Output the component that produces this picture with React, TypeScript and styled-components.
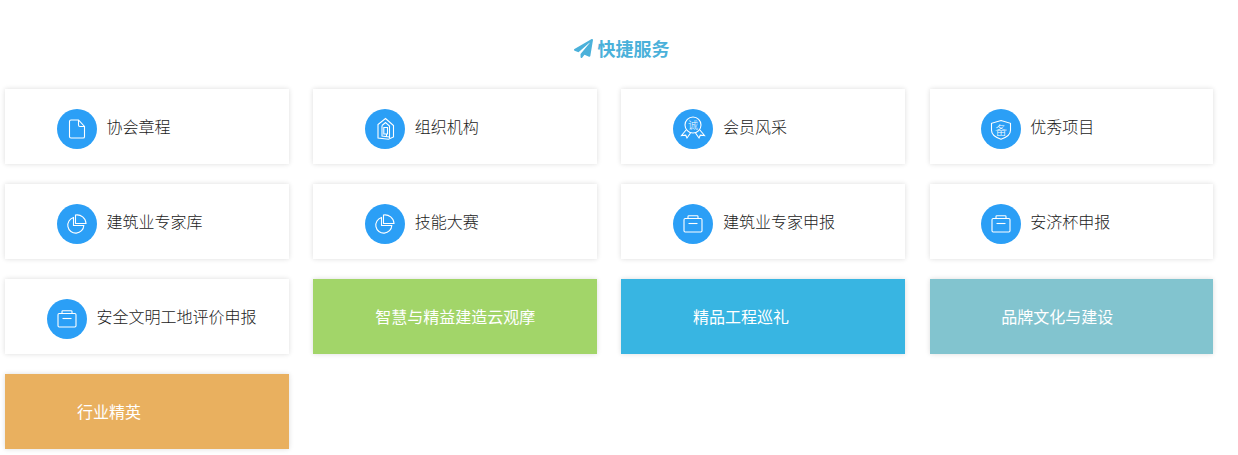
import React from 'react';
import styled, { createGlobalStyle } from 'styled-components';
import { FaPaperPlane } from 'react-icons/fa';

type IconName = 'file' | 'house' | 'medal' | 'shield' | 'pie' | 'case';

const GlobalStyle = createGlobalStyle`
	html, body {
		margin: 0;
		padding: 0;
		background: #fff;
		font-family: "Liberation Sans", "Noto Sans CJK SC", sans-serif;
	}
`;

const ServiceIcon = ({ name }: { name: IconName }) => {
	return (
		<svg width="40" height="40" viewBox="0 0 40 40" fill="none" stroke="#fff" strokeWidth="1.1">
			{name === 'file' && (
				<>
					<path d="M14 11h7.500l6 6.500v10.200a1.300 1.300 0 0 1-1.300 1.300H14a1.500 1.500 0 0 1-1.500-1.500V12.500A1.500 1.500 0 0 1 14 11z" />
					<path d="M21.500 11v5a1.500 1.500 0 0 0 1.500 1.500h4.500" />
				</>
			)}
			{name === 'house' && (
				<>
					<path d="M20.500 9.500l8 7v11.500l-5 2.300-10.500-1.300V15.500z" />
					<path d="M17 16.500l3.500-3 4 3.500v12" />
					<path d="M17 16.500v10.500l7.500 1" />
					<path d="M18.800 18.500h3.700v6.500h-3.700z" />
					<path d="M21.500 25v3" />
				</>
			)}
			{name === 'medal' && (
				<>
					<circle cx="20" cy="16" r="8" />
					<path d="M13.500 20.500l-5 6 4.200-.3 1.300 2.800 3.500-5" />
					<path d="M26.500 20.500l5 6-4.200-.3-1.300 2.800-3.500-5" />
					<text x="20" y="19.500" textAnchor="middle" fontSize="10" fill="#fff" stroke="none" fontFamily="Noto Sans CJK SC, sans-serif">诚</text>
				</>
			)}
			{name === 'shield' && (
				<>
					<path d="M20 11.500l9.500 2.800v7c0 4.300-4 7.200-9.500 9-5.500-1.800-9.500-4.700-9.500-9v-7z" />
					<text x="20" y="25.500" textAnchor="middle" fontSize="12" fill="#fff" stroke="none" fontFamily="Noto Sans CJK SC, sans-serif">备</text>
				</>
			)}
			{name === 'pie' && (
				<>
					<path d="M16.500 13.500A8 8 0 1 0 26.800 21.500H16.500z" />
					<path d="M18.500 11v8.500H29A9 9 0 0 0 18.500 11z" />
				</>
			)}
			{name === 'case' && (
				<>
					<rect x="11" y="14.500" width="18" height="13.500" rx="1.200" />
					<path d="M15 14.500v-2a.8.8 0 0 1 .8-.8h8.400a.8.8 0 0 1 .8.8v2" />
					<path d="M15.500 19.500h9" />
				</>
			)}
		</svg>
	);
};

const App = () => {
	return (
		<Wrapper>
			<GlobalStyle />
			<Title>
				<FaPaperPlane />
				<span>快捷服务</span>
			</Title>
			<Grid>
				<LinkCard $left={52}><IconCircle><ServiceIcon name="file" /></IconCircle><Label>协会章程</Label></LinkCard>
				<LinkCard $left={52}><IconCircle><ServiceIcon name="house" /></IconCircle><Label>组织机构</Label></LinkCard>
				<LinkCard $left={52}><IconCircle><ServiceIcon name="medal" /></IconCircle><Label>会员风采</Label></LinkCard>
				<LinkCard $left={51}><IconCircle><ServiceIcon name="shield" /></IconCircle><Label>优秀项目</Label></LinkCard>
				<LinkCard $left={52}><IconCircle><ServiceIcon name="pie" /></IconCircle><Label>建筑业专家库</Label></LinkCard>
				<LinkCard $left={52}><IconCircle><ServiceIcon name="pie" /></IconCircle><Label>技能大赛</Label></LinkCard>
				<LinkCard $left={52}><IconCircle><ServiceIcon name="case" /></IconCircle><Label>建筑业专家申报</Label></LinkCard>
				<LinkCard $left={51}><IconCircle><ServiceIcon name="case" /></IconCircle><Label>安济杯申报</Label></LinkCard>
				<LinkCard $left={42}><IconCircle><ServiceIcon name="case" /></IconCircle><Label>安全文明工地评价申报</Label></LinkCard>
				<LinkCard $left={62} $bg="#a2d569"><Label>智慧与精益建造云观摩</Label></LinkCard>
				<LinkCard $left={71.6} $bg="#38b5e2"><Label>精品工程巡礼</Label></LinkCard>
				<LinkCard $left={71.6} $bg="#82c4cf"><Label>品牌文化与建设</Label></LinkCard>
				<LinkCard $left={72} $bg="#e9b05f"><Label>行业精英</Label></LinkCard>
			</Grid>
		</Wrapper>
	);
};

const Wrapper = styled.div`
	width: 1238px;
	height: 455px;
	overflow: hidden;
	padding: 35px 0 0 5px;
	box-sizing: border-box;
`;

const Title = styled.h2`
	display: flex;
	align-items: center;
	justify-content: center;
	gap: 5px;
	height: 26px;
	margin: 0 0 28px;
	font-size: 18px;
	font-weight: bold;
	color: #4bb1da;

	svg {
		width: 19px;
		height: 19px;
	}
`;

const Grid = styled.div`
	display: grid;
	grid-template-columns: repeat(4, 283.8px);
	grid-auto-rows: 75px;
	column-gap: 24.4px;
	row-gap: 20px;
`;

const LinkCard = styled.a<{ $left: number; $bg?: string }>`
	display: flex;
	align-items: center;
	gap: 9.6px;
	padding-left: ${p => p.$left}px;
	background: ${p => p.$bg || '#fff'};
	box-shadow: 0 0 5px rgba(0, 0, 0, 0.14);
	font-size: 16px;
	font-weight: ${p => (p.$bg ? 400 : 300)};
	white-space: nowrap;
	color: ${p => (p.$bg ? '#fff' : '#222')};
`;

const Label = styled.span`
	padding-bottom: 2px;
`;

const IconCircle = styled.span`
	display: flex;
	flex: none;
	width: 40px;
	height: 40px;
	margin-top: 5px;
	border-radius: 50%;
	background: #2b9ff6;
`;

export default App;
